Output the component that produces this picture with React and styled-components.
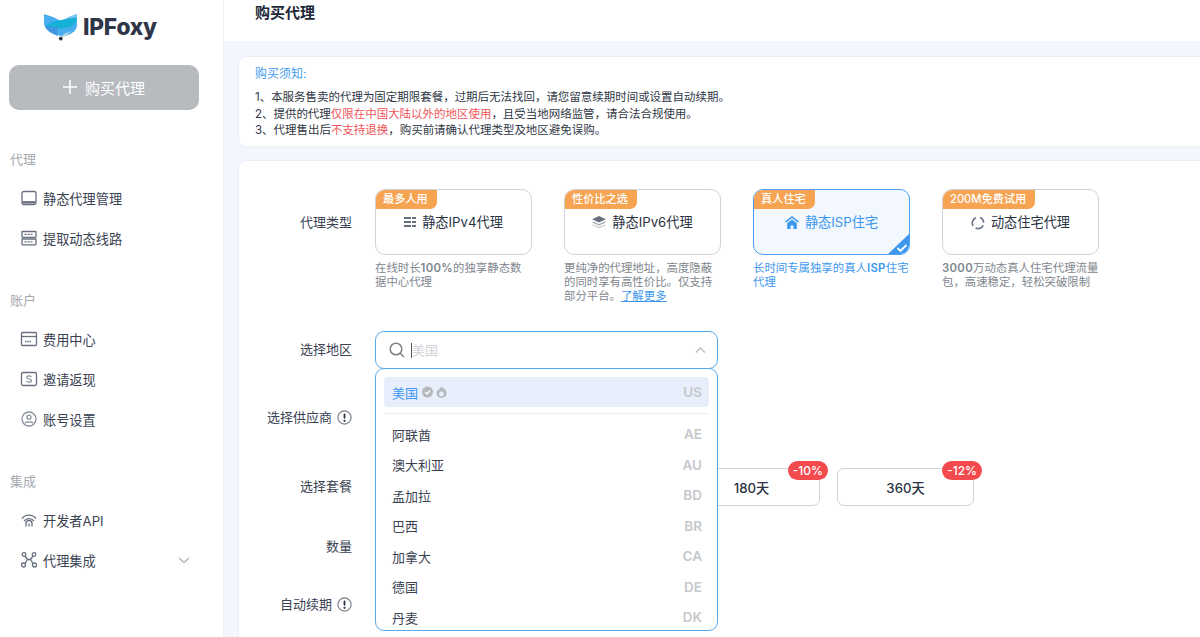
import React from 'react';
import styled, { createGlobalStyle } from 'styled-components';

const FONT = `Inter, "Noto Sans CJK SC", "Noto Sans", sans-serif`;

const Global = createGlobalStyle`
  html, body { margin: 0; padding: 0; height: 100%; overflow: hidden; background: #fff; }
  * { box-sizing: border-box; }
  body { font-family: ${FONT}; }
`;

const Page = styled.div`
  display: flex;
  width: 1200px;
  height: 637px;
  overflow: hidden;
`;

const Sidebar = styled.aside`
  width: 224px;
  flex: none;
  background: #fff;
  border-right: 1px solid #eef1f6;
  padding: 0 0 0 9px;
`;

const LogoRow = styled.div`
  display: flex;
  align-items: center;
  height: 53px;
  padding-left: 35px;
  gap: 5px;
`;

const LogoText = styled.span`
  font-size: 22.7px;
  font-weight: 800;
  color: #2e3648;
  letter-spacing: -0.2px;
`;

const BuyButton = styled.button`
  display: flex;
  align-items: center;
  justify-content: center;
  gap: 8px;
  width: 190px;
  height: 45px;
  margin: 12px 0 0;
  padding: 0 0 1px;
  border: none;
  border-radius: 10px;
  background: #b7babf;
  color: #fff;
  font-family: ${FONT};
  font-size: 15px;
`;

const SectionTitle = styled.div`
  height: 24px;
  line-height: 24px;
  margin: ${p => p.$top}px 0 7px 1px;
  font-size: 13px;
  color: #a6a9af;
`;

const NavItem = styled.div`
  display: flex;
  align-items: center;
  height: 40px;
  padding-left: 11px;
  font-size: 13.2px;
  color: #3a4252;
`;

const NavIcon = styled.span`
  display: flex;
  width: 18px;
  height: 18px;
  margin-right: 5px;
  color: #68707f;
`;

const NavChevron = styled.span`
  display: flex;
  margin-left: auto;
  margin-right: 33px;
  color: #b4b8bf;
`;

const Main = styled.main`
  flex: 1;
  min-width: 0;
  background: #f2f7fd;
`;

const Header = styled.header`
  height: 41px;
  padding: 3px 0 0 31px;
  background: #fff;
  font-size: 15px;
  line-height: 20px;
  font-weight: 600;
  color: #1d2738;
`;

const Notice = styled.section`
  margin: 15px 0 13px 14px;
  height: 91px;
  padding: 8px 0 0 16px;
  background: #fff;
  border: 1px solid #e9eff7;
  border-right: none;
  border-radius: 8px 0 0 8px;
`;

const NoticeTitle = styled.div`
  font-size: 12px;
  line-height: 18px;
  color: #3f9bf0;
  margin-bottom: 6px;
`;

const NoticeLine = styled.div`
  font-size: 11.47px;
  line-height: 16.5px;
  color: #2f3745;
`;

const Red = styled.span`
  color: #f0555a;
`;

const FormCard = styled.section`
  position: relative;
  margin-left: 14px;
  height: 600px;
  padding-top: 28px;
  background: #fff;
  border: 1px solid #e9eff7;
  border-right: none;
  border-radius: 8px 0 0 0;
`;

const Row = styled.div`
  display: flex;
  align-items: ${p => p.$start ? 'flex-start' : 'center'};
  margin-top: ${p => p.$top || 0}px;
  min-height: 38px;
`;

const Label = styled.div`
  display: flex;
  align-items: center;
  justify-content: flex-end;
  gap: 5px;
  width: 113px;
  margin-right: 23px;
  padding-bottom: ${p => p.$start ? 0 : 2}px;
  font-size: 13px;
  color: #3a4252;
  line-height: ${p => p.$start ? '66px' : '20px'};
  white-space: nowrap;
`;

const Types = styled.div`
  display: flex;
  gap: 32px;
`;

const TypeCol = styled.div`
  width: 157px;
`;

const TypeBox = styled.div`
  position: relative;
  height: 66px;
  padding-top: 23px;
  display: flex;
  justify-content: center;
  align-items: flex-start;
  gap: 6px;
  border: 1px solid ${p => p.$on ? '#4ba0f0' : '#cfd2d6'};
  border-radius: 10px;
  background: ${p => p.$on ? '#f2f8fe' : '#fff'};
  color: ${p => p.$on ? '#3d97ee' : '#2b3342'};
  font-size: 13.2px;
  line-height: 18px;
  overflow: hidden;
`;

const Badge = styled.span`
  position: absolute;
  left: -1px;
  top: -1px;
  height: 20px;
  padding: 0 9px 0 8px;
  background: #f6a352;
  border-radius: 10px 0 7px 0;
  color: #fff;
  font-size: 11.2px;
  font-weight: 500;
  line-height: 20px;
`;

const Corner = styled.svg`
  position: absolute;
  right: -1px;
  bottom: -1px;
`;

const TypeDesc = styled.div`
  margin-top: 6px;
  font-size: 11.4px;
  line-height: 14px;
  white-space: nowrap;
  color: ${p => p.$on ? '#3d97ee' : '#81868e'};
`;

const DescLine = styled.div``;

const Num = styled.span`
  font-weight: 600;
  letter-spacing: 0.3px;
`;

const More = styled.a`
  color: #3d97ee;
  text-decoration: underline;
`;

const TypeIcon = styled.span`
  display: flex;
  margin-top: 3px;
  color: ${p => p.$on ? '#3d97ee' : '#68707f'};
`;

const SelectBox = styled.div`
  display: flex;
  align-items: center;
  width: 343px;
  height: 38px;
  padding: 0 11px 0 13px;
  border: 1px solid #58a9ea;
  border-radius: 9px;
  background: #fff;
`;

const Caret = styled.span`
  width: 1px;
  height: 15px;
  margin-left: 6px;
  background: #555;
`;

const Placeholder = styled.span`
  flex: 1;
  padding-bottom: 2px;
  font-size: 13px;
  color: #d0d2d6;
`;

const Dropdown = styled.div`
  position: absolute;
  left: 136px;
  top: 207px;
  width: 343px;
  height: 263px;
  padding: 8px 8px 0;
  background: #fff;
  border: 1px solid #58a9ea;
  border-radius: 9px;
  overflow: hidden;
  z-index: 2;
`;

const Option = styled.div`
  display: flex;
  align-items: center;
  height: ${p => p.$on ? 30 : 30.5}px;
  padding: 0 7px 0 8px;
  border-radius: 4px;
  background: ${p => p.$on ? '#e8eefb' : 'transparent'};
  font-size: 13px;
  color: ${p => p.$on ? '#3d97ee' : '#3a4252'};
`;

const Code = styled.span`
  margin-left: auto;
  font-size: 13.5px;
  font-weight: 600;
  color: #c6c8cc;
`;

const BadgeIcons = styled.svg`
  margin-left: 3px;
`;

const Divider = styled.div`
  height: 1px;
  margin: 6px 0 5px;
  background: #eceef1;
`;

const Plans = styled.div`
  display: flex;
  gap: 17px;
`;

const Plan = styled.div`
  position: relative;
  display: flex;
  align-items: center;
  justify-content: center;
  width: 137px;
  height: 38px;
  border: 1px solid #cfd2d6;
  border-radius: 7px;
  background: #fff;
  font-size: 13.2px;
  font-weight: 500;
  color: #2b3342;
`;

const Off = styled.span`
  position: absolute;
  right: -9px;
  top: -8px;
  height: 19px;
  padding: 0 5px;
  border-radius: 10px;
  background: #f24a4d;
  color: #fff;
  font-size: 12px;
  font-weight: 500;
  line-height: 19px;
`;

const Svg = ({ children, s = 18, v = 18 }) => (
  <svg width={s} height={s} viewBox={`0 0 ${v} ${v}`} fill="none" stroke="currentColor" strokeWidth="1.3">{children}</svg>
);

const Info = () => (
  <svg width="15" height="15" viewBox="0 0 15 15">
    <circle cx="7.5" cy="7.5" r="6.6" fill="none" stroke="#7a7f87" strokeWidth="1.2" />
    <rect x="6.6" y="3.5" width="1.8" height="5.2" rx=".9" fill="#2b3342" />
    <circle cx="7.5" cy="10.8" r="1.1" fill="#2b3342" />
  </svg>
);

const Logo = () => (
  <svg width="34" height="28" viewBox="0 0 34 28">
    <path d="M0 1l9 3 8 4 8-4 8-3v11c0 5-4 8-9 10l-5 2-5-2C7 20 1 16 0 11z" fill="#49aef0" />
    <path d="M17 8l8-4 8-3v3C24 5 16 8 9 10c2-1 5-1 8-2z" fill="#7cc6f4" />
    <path d="M1 13C8 8 20 6 33 5c-1 6-6 10-12 10-6 1-13 1-20-2z" fill="#17b0d6" />
    <path d="M1 13c5 1 10 1 13 1-1 3-1 6 0 9-5-2-12-5-13-10z" fill="#3f97e2" />
    <path d="M14 21l3 3 3-3 7-3c-3 3-6 5-9 6h-2z" fill="#c5d9e3" />
    <path d="M19 23l6-2-7 4z" fill="#d2dde4" />
    <circle cx="16.8" cy="25.6" r="1.9" fill="#2c3442" />
  </svg>
);

const Nav = ({ icon, children, chevron }) => (
  <NavItem>
    <NavIcon>{icon}</NavIcon>
    {children}
    {chevron && (
      <NavChevron>
        <svg width="12" height="12" viewBox="0 0 12 12" fill="none" stroke="currentColor" strokeWidth="1.5"><path d="M1 4l5 4.5L11 4" /></svg>
      </NavChevron>
    )}
  </NavItem>
);

const icons = {
  laptop: (
    <Svg>
      <rect x="2" y="2.5" width="14" height="13" rx="1.8" />
      <path d="M2.5 13.3h13" strokeWidth="2.4" />
    </Svg>
  ),
  rack: (
    <Svg>
      <rect x="2" y="2.5" width="14" height="5.8" rx=".5" />
      <rect x="2" y="10" width="14" height="5.8" rx=".5" />
      <path d="M4.5 5.4h9M4.5 12.9h9" strokeDasharray="2 1" strokeWidth="1.1" />
    </Svg>
  ),
  card: <Svg><rect x="1.5" y="2.5" width="15" height="13" rx="1" /><path d="M1.5 6.5h15" /><path d="M5 11.5h6" strokeDasharray="1.5 .8" /></Svg>,
  dollar: (
    <Svg>
      <rect x="1.5" y="2.5" width="15" height="13" rx="1.5" />
      <path d="M11.4 6.8C10.8 6 10 5.8 9 5.8c-1.3 0-2.3.6-2.3 1.6 0 2.2 4.8 1 4.8 3.2 0 1-1 1.6-2.5 1.6-1.1 0-2-.4-2.6-1.1" strokeWidth="1.2" stroke="#8a909b" />
    </Svg>
  ),
  user: <Svg><circle cx="9" cy="9" r="7" stroke="#8a909b" /><circle cx="9" cy="7.2" r="2" stroke="#8a909b" /><path d="M5 13c1.2-1.6 6.8-1.6 8 0" stroke="#8a909b" /></Svg>,
  api: (
    <Svg>
      <path d="M2 7.5a9 9 0 0 1 14 0M4 10a6.5 6.5 0 0 1 10 0" />
      <path d="M6 15.5v-3a3 3 0 0 1 6 0v3M9 15.5v-3" />
    </Svg>
  ),
  nodes: (
    <Svg>
      <circle cx="4" cy="3.5" r="1.8" /><circle cx="14" cy="3.5" r="1.8" /><circle cx="3.5" cy="14" r="2" /><circle cx="14.5" cy="14" r="2" />
      <path d="M5 5l2.5 3.5h3L13 5M5 12.5l2.5-4M13 12.5l-2.5-4" />
    </Svg>
  ),
};

const typeIcons = {
  v4: <svg width="12" height="12" viewBox="0 0 12 12" fill="currentColor"><path d="M0 1h7v2H0zM8 1h4v2H8zM0 5h7v2H0zM8 5h4v2H8zM0 9h7v2H0zM8 9h4v2H8z" /></svg>,
  v6: <svg width="14" height="13" viewBox="0 0 14 13" fill="currentColor"><path d="M7 0l7 3.2-7 3.2L0 3.2z" /><path d="M1.4 5.6L7 8.2l5.6-2.6L14 6.3 7 9.5 0 6.3z" opacity=".65" /><path d="M1.4 8.4L7 11l5.6-2.6L14 9.1 7 12.3 0 9.1z" opacity=".4" /></svg>,
  isp: <svg width="14" height="13" viewBox="0 0 14 13" fill="currentColor"><path d="M7 0l7 5.6-.9 1.1L7 2 .9 6.7 0 5.6z" /><path d="M2.2 7.2L7 3.5l4.8 3.7V13H8.4V9.5H5.6V13H2.2z" /></svg>,
  dyn: <svg width="14" height="14" viewBox="0 0 14 14" fill="none" stroke="currentColor" strokeWidth="1.6"><path d="M9 1.6a5.6 5.6 0 0 1 3.6 5" /><path d="M12.2 9.2A5.6 5.6 0 0 1 4.6 12" /><path d="M2.2 10A5.6 5.6 0 0 1 5 1.7" /></svg>,
};

const types = [
  {
    badge: '最多人用', icon: 'v4', title: '静态IPv4代理',
    desc: [<>在线时长<Num>100%</Num>的独享静态数</>, '据中心代理'],
  },
  {
    badge: '性价比之选', icon: 'v6', title: '静态IPv6代理',
    desc: ['更纯净的代理地址，高度隐蔽', '的同时享有高性价比。仅支持', <>部分平台。<More>了解更多</More></>],
  },
  {
    badge: '真人住宅', icon: 'isp', title: '静态ISP住宅', on: true,
    desc: [<>长时间专属独享的真人<Num>ISP</Num>住宅</>, '代理'],
  },
  {
    badge: '200M免费试用', icon: 'dyn', title: '动态住宅代理',
    desc: [<><Num>3000</Num>万动态真人住宅代理流量</>, '包，高速稳定，轻松突破限制'],
  },
];

const countries = [
  ['阿联酋', 'AE'], ['澳大利亚', 'AU'], ['孟加拉', 'BD'], ['巴西', 'BR'], ['加拿大', 'CA'], ['德国', 'DE'], ['丹麦', 'DK'],
];

export default function App() {
  return (
    <Page>
      <Global />
      <Sidebar>
        <LogoRow><Logo /><LogoText>IPFoxy</LogoText></LogoRow>
        <BuyButton>
          <svg width="14" height="14" viewBox="0 0 14 14" stroke="#fff" strokeWidth="1.6"><path d="M7 0v14M0 7h14" /></svg>
          购买代理
        </BuyButton>
        <SectionTitle $top={37}>代理</SectionTitle>
        <Nav icon={icons.laptop}>静态代理管理</Nav>
        <Nav icon={icons.rack}>提取动态线路</Nav>
        <SectionTitle $top={30}>账户</SectionTitle>
        <Nav icon={icons.card}>费用中心</Nav>
        <Nav icon={icons.dollar}>邀请返现</Nav>
        <Nav icon={icons.user}>账号设置</Nav>
        <SectionTitle $top={30}>集成</SectionTitle>
        <Nav icon={icons.api}>开发者API</Nav>
        <Nav icon={icons.nodes} chevron>代理集成</Nav>
      </Sidebar>
      <Main>
        <Header>购买代理</Header>
        <Notice>
          <NoticeTitle>购买须知:</NoticeTitle>
          <NoticeLine>1、本服务售卖的代理为固定期限套餐，过期后无法找回，请您留意续期时间或设置自动续期。</NoticeLine>
          <NoticeLine>2、提供的代理<Red>仅限在中国大陆以外的地区使用</Red>，且受当地网络监管，请合法合规使用。</NoticeLine>
          <NoticeLine>3、代理售出后<Red>不支持退换</Red>，购买前请确认代理类型及地区避免误购。</NoticeLine>
        </Notice>
        <FormCard>
          <Row $start>
            <Label $start>代理类型</Label>
            <Types>
              {types.map(t => (
                <TypeCol key={t.title}>
                  <TypeBox $on={t.on}>
                    <Badge>{t.badge}</Badge>
                    <TypeIcon $on={t.on}>{typeIcons[t.icon]}</TypeIcon>
                    {t.title}
                    {t.on && (
                      <Corner width="23" height="22" viewBox="0 0 23 22">
                        <path d="M23 0v22H0z" fill="#3d97ee" />
                        <path d="M10.5 15l3 3 6-6" fill="none" stroke="#fff" strokeWidth="1.8" />
                      </Corner>
                    )}
                  </TypeBox>
                  <TypeDesc $on={t.on}>
                    {t.desc.map((line, i) => <DescLine key={i}>{line}</DescLine>)}
                  </TypeDesc>
                </TypeCol>
              ))}
            </Types>
          </Row>
          <Row $top={28}>
            <Label>选择地区</Label>
            <SelectBox>
              <svg width="16" height="16" viewBox="0 0 16 16" fill="none" stroke="#7d8289" strokeWidth="1.5"><circle cx="7" cy="7" r="5.8" /><path d="M11.2 11.2L15 15" /></svg>
              <Caret />
              <Placeholder>美国</Placeholder>
              <svg width="11" height="11" viewBox="0 0 11 11" fill="none" stroke="#b9bcc2" strokeWidth="1.4"><path d="M1 7.5L5.5 3 10 7.5" /></svg>
            </SelectBox>
          </Row>
          <Row $top={30}>
            <Label>选择供应商<Info /></Label>
          </Row>
          <Row $top={31}>
            <Label>选择套餐</Label>
            <Plans>
              <Plan>30天</Plan>
              <Plan>90天</Plan>
              <Plan>180天<Off>-10%</Off></Plan>
              <Plan>360天<Off>-12%</Off></Plan>
            </Plans>
          </Row>
          <Row $top={22}><Label>数量</Label></Row>
          <Row $top={20}><Label>自动续期<Info /></Label></Row>
          <Dropdown>
            <Option $on>
              美国
              <BadgeIcons width="28" height="14" viewBox="0 0 28 14">
                <circle cx="6.5" cy="7" r="5.5" fill="#b5b8bd" />
                <path d="M4 7l2 2 3-3.5" fill="none" stroke="#fff" strokeWidth="1.2" />
                <path d="M20.5 1.2c1.2 1.4 1 2.3 1.3 3 .5-.2.8-.6.9-1.2 1.6 1.2 2.8 3 2.8 5a5 5 0 0 1-10 0c0-3 3.800-3.800 5-6.800z" fill="#b5b8bd" />
                <circle cx="20.5" cy="9" r="2.4" fill="#e8eefb" />
              </BadgeIcons>
              <Code>US</Code>
            </Option>
            <Divider />
            {countries.map(([n, c]) => (
              <Option key={c}>{n}<Code>{c}</Code></Option>
            ))}
          </Dropdown>
        </FormCard>
      </Main>
    </Page>
  );
}
